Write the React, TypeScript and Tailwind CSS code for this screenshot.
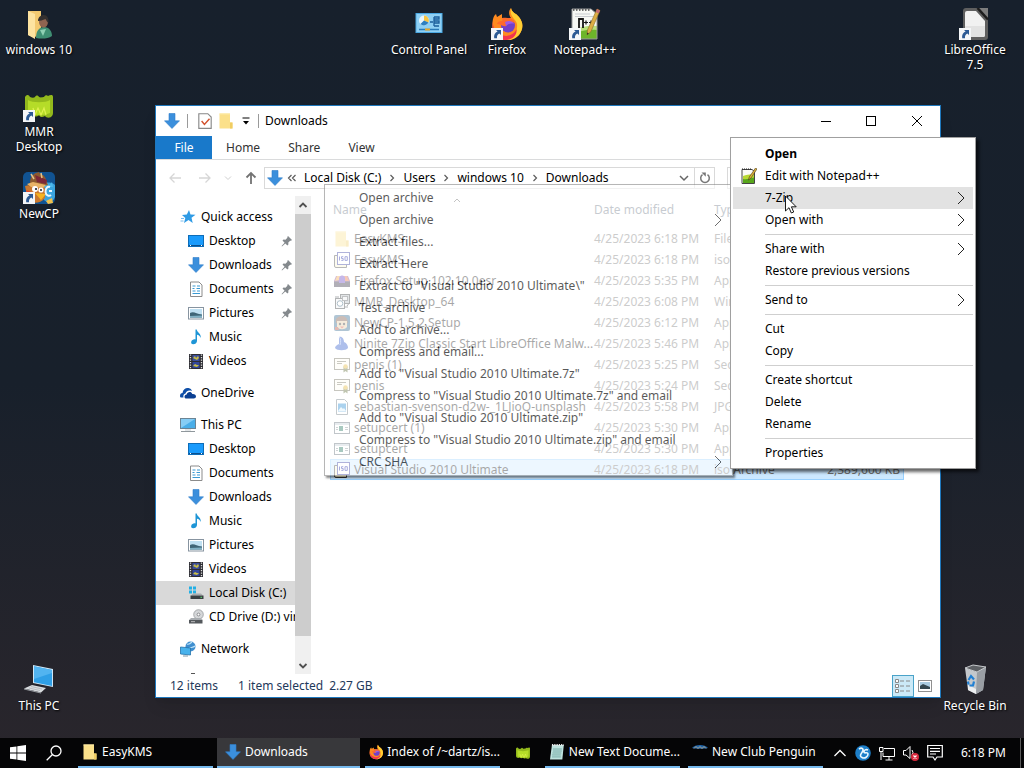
import type { ReactNode } from 'react';

interface IconProps {
  className?: string;
}

function ShortcutBadge() {
  return (
    <svg viewBox="0 0 12 12" className="absolute bottom-0 left-0 w-3 h-3">
      <rect width="12" height="12" fill="#f4f6f8" />
      <path d="M5 2h5v5L8.400 5.400C6.600 6.200 5.800 7.600 6 10.200H3.200C2.600 7 4 4.800 6.600 3.600Z" fill="#2c5a94" />
    </svg>
  );
}

function DownArrowIcon({ className = 'w-4 h-4' }: IconProps) {
  return (
    <svg viewBox="0 0 16 16" className={className}>
      <path d="M5 .5h6v7.300h4.500L8 15.500.5 7.800H5Z" fill="#3b8fdc" stroke="#2f7ec9" strokeWidth=".6" />
    </svg>
  );
}

function FolderIcon({ className = 'w-4 h-4' }: IconProps) {
  return (
    <svg viewBox="0 0 16 16" className={className}>
      <path d="M1.500.5H12v9h2.500v6h-13Z" fill="#fbe08a" />
      <path d="M12 9.500h2.500v6H12Z" fill="#f0cd62" />
      <path d="M1.500.5H12v1H1.500Z" fill="#fdeaa6" />
    </svg>
  );
}

function UserFolderIcon() {
  return (
    <svg viewBox="0 0 32 32" className="w-8 h-8">
      <path d="M5 3h13v25l-8 1-5-2Z" fill="#f3c970" />
      <path d="M5 3l7 3v25l-7-4Z" fill="#fde3a0" />
      <path d="M13 30c0-7 3-11 8-11s8 4 8 9c-4 3-11 3-16 2Z" fill="#3f8f73" />
      <path d="M17 22l3 6 3-7Z" fill="#8fd0b4" />
      <ellipse cx="20.500" cy="14" rx="4.500" ry="5.500" fill="#8f6450" />
      <path d="M15 13c0-4 3-6 6-6s5 3 4.500 8c-2-1-2-3-3-4-3 1-5 2-7.500 2Z" fill="#33302f" />
    </svg>
  );
}

function MmrIcon({ className = 'w-8 h-8' }: IconProps) {
  return (
    <svg viewBox="0 0 32 32" className={className}>
      <path d="M2 7c2-3 4-2 5 0 2 1 4 1 5 0 1-2 3-2 4 0 2 1 4 0 5 0 1-2 3-2 4-1 2-1 5-2 5 1v16c0 5-6 6-8 3-3 2-5 1-6-1-2 2-5 2-6 0-3 2-8 1-8-3Z" fill="#93b91c" />
      <path d="M5 10c4 3 18 3 22 0v13c-7 3-15 3-22 0Z" fill="#b5dc28" />
      <path d="M10 18l2 7 3-7 3 7 3-7 2 7" fill="none" stroke="#dff24f" strokeWidth="1.200" />
    </svg>
  );
}

function NewCpIcon({ className = 'w-8 h-8' }: IconProps) {
  return (
    <svg viewBox="0 0 32 32" className={className}>
      <rect width="32" height="32" rx="5" fill="#115392" />
      <path d="M20 14c3-5 9-4 12-1v12c-2 6-8 6-11 3Z" fill="#3aa4de" />
      <path d="M22 15l2-5 2 4 3-4 1 5" fill="#4db9ec" />
      <path d="M2 14c6-2 16-2 20 2v10c-5 6-13 6-17 2Z" fill="#c9782f" />
      <path d="M7 11c0-8 5-10 9-11 1 3 6 2 7 8l2 5c-7 2-12 2-20 1Z" fill="#8d5a2e" />
      <path d="M12 3l12 5-1 4-9-2Z" fill="#7c2736" />
      <path d="M4 12l6-2 13 3-3 3-12-1Z" fill="#e9b366" />
      <path d="M8 2l3 5M18 1l1 5" stroke="#e6c28a" strokeWidth="1.500" />
      <circle cx="12" cy="17" r="3" fill="#fff" />
      <circle cx="18" cy="18" r="2.600" fill="#fff" />
      <circle cx="13" cy="17" r="1.100" fill="#20242c" />
      <circle cx="18" cy="18" r="1" fill="#20242c" />
      <path d="M12 21l11 1-5 6Z" fill="#f5b321" />
      <path d="M3 18l6 2-2 8Z" fill="#e2452a" />
      <path d="M27 15a3.500 4.500 0 1 0 1 8M26 19h3" fill="none" stroke="#e7f7ff" strokeWidth="2" />
      <path d="M23 29l6-3 1 5-5 1Z" fill="#f2c14b" />
    </svg>
  );
}

function ControlPanelIcon() {
  return (
    <svg viewBox="0 0 32 32" className="w-8 h-8">
      <rect x="2.500" y="5" width="27" height="20" fill="#4ba9e4" />
      <rect x="3.500" y="6" width="25" height="18" fill="#8fd0f4" />
      <circle cx="11" cy="12.500" r="5" fill="#e9f6fd" />
      <path d="M11 12.500V7.500a5 5 0 0 1 4.500 7Z" fill="#f6c443" />
      <path d="M11 12.500l4.500 2a5 5 0 0 1-8 1.500Z" fill="#2d7fc1" />
      <path d="M17 14h3m1-5v9m0-9h5v2h-5m0 2h5v2h-5m0 3h5" fill="none" stroke="#1b5e9b" strokeWidth="1.300" />
      <path d="M6 21.500h20" stroke="#2a7ab8" strokeWidth="1.500" />
      <path d="M12 21.500h5" stroke="#eaa927" strokeWidth="2" />
    </svg>
  );
}

function FirefoxIcon({ className = 'w-8 h-8' }: IconProps) {
  return (
    <svg viewBox="0 0 32 32" className={className}>
      <path d="M1.500 14C2 10 3 7.500 5 6l1 3 5-3v4h9c-3-4-2-8 0-10 1 5 5 5 8 9 5 6 4 13 0 18-6 7-17 7-23 1-4-4-4-9-3.500-14Z" fill="#ff8a1f" />
      <path d="M20 0c1 5 5 5 8 9 5 6 4 13 0 18-4 4-8 5-12 5 6-4 11-8 10-16-1-5-8-7-6-16Z" fill="#ffcf33" />
      <path d="M1.500 14c1 8 5 13 14 14 6-1 9-4 10-7 1 6-4 11-11 11S1 26 1.500 14Z" fill="#f2344f" />
      <circle cx="17" cy="17.500" r="7" fill="#7240c9" />
      <path d="M11 10c5-1 11 0 13 5-4-2-7 0-9 3-3 1-6-2-9-2 1-3 3-3 6-3Z" fill="#ff6a2b" />
      <path d="M14 14c4-2 8-1 9 2-3-1-6 0-8 2Z" fill="#9c5be8" />
    </svg>
  );
}

function NotepadPlusIcon() {
  return (
    <svg viewBox="0 0 32 32" className="w-8 h-8">
      <path d="M3 1h19l6 5v25H3Z" fill="#f7f8f4" />
      <path d="M3 22c9-3 17-5 25-4v13H3Z" fill="#b9e07a" />
      <path d="M3 26c8-3 16-5 25-4v9H3Z" fill="#6db52a" />
      <path d="M3 1h19l6 5v25H3Z" fill="none" stroke="#999" strokeWidth="1" />
      <path d="M4 2h17" stroke="#444" strokeWidth="1.500" strokeDasharray="1.500 1.500" />
      <path d="M6 6h15M6 8.500h18" stroke="#c9ccd0" />
      <path d="M10 20v-9h4v9" fill="none" stroke="#151515" strokeWidth="1.800" />
      <path d="M15 14.500h4m-2-2v4m3-2h4m-2-2v4" stroke="#151515" strokeWidth="1.200" />
      <path d="M28 1l3 1.500-9 21-4 3.500 .5-5Z" fill="#dcae45" stroke="#8a6a28" strokeWidth=".6" />
      <path d="M28 1l3 1.500-1.300 3-3-1.500Z" fill="#c66a70" />
      <path d="M18 27l.3-2.500 1.500 1Z" fill="#222" />
    </svg>
  );
}

function NotepadPlusSmallIcon() {
  return (
    <svg viewBox="0 0 16 16" className="w-4 h-4">
      <path d="M1 1.500h10l2.500 2V15.500H1Z" fill="#fbfbf8" stroke="#444" />
      <path d="M1 1h10" stroke="#222" strokeDasharray="1 1" />
      <path d="M2 8c4-1 7-2 11-1.500V15H2Z" fill="#b8d832" />
      <path d="M2 11c4 1 7-1 11-1.500V15H2Z" fill="#58a61c" />
      <path d="M14.500 0l1.500 1-6 9-2.500 2 .8-3Z" fill="#e0b33c" stroke="#473615" strokeWidth=".6" />
    </svg>
  );
}

function LibreOfficeIcon() {
  return (
    <svg viewBox="0 0 32 32" className="w-8 h-8">
      <path d="M7 0h13l9 10v19a3 3 0 0 1-3 3H7a3 3 0 0 1-3-3V3a3 3 0 0 1 3-3Z" fill="#5f5f5f" />
      <path d="M19 0h10v11Z" fill="#7d7d7d" />
      <path d="M18.500 0L29 11.500" stroke="#1d1d1d" strokeWidth="2.500" />
      <path d="M8 3h9l9 10v14a2 2 0 0 1-2 2H8a2 2 0 0 1-2-2V5a2 2 0 0 1 2-2Z" fill="#f1f1f1" />
      <path d="M6 18h20v9a2 2 0 0 1-2 2H8a2 2 0 0 1-2-2Z" fill="#e2e2e2" />
    </svg>
  );
}

function LaptopIcon() {
  return (
    <svg viewBox="0 0 32 32" className="w-8 h-8">
      <path d="M10 1l20 4v18l-20-4Z" fill="#cfe6f5" />
      <path d="M11 2.300l18 3.600v16l-18-3.600Z" fill="#2f9fe6" />
      <path d="M11 2.300l18 3.600v3L11 15Z" fill="#52b4f0" />
      <path d="M9 21l14 3-5 4.500L1 24.500Z" fill="#d9dcdf" />
      <path d="M1 24.500l17 4v1l-17-4Z" fill="#9a9ea3" />
      <path d="M8 22.500l11 2.500M6 24l11 2.500" stroke="#aeb3b8" strokeWidth=".8" />
    </svg>
  );
}

function RecycleBinIcon() {
  return (
    <svg viewBox="0 0 32 32" className="w-8 h-8">
      <path d="M6 4l12 4 9-5-3 23-7 4-8-4Z" fill="#c4c8cc" />
      <path d="M18 8l9-5-3 23-7 4Z" fill="#999ea4" />
      <path d="M6 4l8-3 13 2-9 5Z" fill="#5d6064" stroke="#c6c9cc" strokeWidth="1" />
      <path d="M9 21l8 4v5l-8-4Z" fill="#eceef0" />
      <path d="M9.500 16l2.500-4 3 3.500m0 2l-1 4h-3.500m-1-1l-.5-3" fill="none" stroke="#2180d4" strokeWidth="2.200" />
    </svg>
  );
}

function StarIcon() {
  return (
    <svg viewBox="0 0 16 16" className="w-4 h-4">
      <path d="M9 1l1.500 4.500 5 .3-4 3 1.200 5.200L8.500 11 4 14l1.300-5L2 6l4.800-.5Z" fill="#2f9be5" />
      <path d="M1 9.500h3M.5 12h3" stroke="#79bdee" strokeWidth="1" />
    </svg>
  );
}

function DesktopIcon() {
  return (
    <svg viewBox="0 0 16 16" className="w-4 h-4">
      <rect x=".5" y="2.500" width="15" height="11" fill="#1a9bfc" stroke="#0e6db8" />
      <path d="M1 12.500h14" stroke="#0b4f8c" strokeWidth="1" />
      <path d="M2 12.500h1M13 12.500h1" stroke="#fff" />
    </svg>
  );
}

function DocumentIcon() {
  return (
    <svg viewBox="0 0 16 16" className="w-4 h-4">
      <path d="M2.500 1h8.500l3 3v11.500H2.500Z" fill="#fff" stroke="#8b8b8b" />
      <path d="M4.500 5h3m1.500 0h3M4.500 7.500h2m2 0h3.500M4.500 10h3m1.500 0h3M4.500 12.500h7.500" stroke="#3a9ad3" strokeWidth="1.200" />
    </svg>
  );
}

function PictureIcon() {
  return (
    <svg viewBox="0 0 16 16" className="w-4 h-4">
      <rect x=".5" y="2.500" width="15" height="11.500" fill="#fff" stroke="#8794a0" />
      <rect x="2" y="4" width="12" height="8.500" fill="#bfe0f2" />
      <path d="M2 8c4-2 6 1 12 1.500v3H2Z" fill="#3f6577" />
      <path d="M2 11l12-.5v2H2Z" fill="#7fb0c4" />
    </svg>
  );
}

function MusicIcon() {
  return (
    <svg viewBox="0 0 16 16" className="w-4 h-4">
      <path d="M7.500.5h1.200c.3 3 4.800 4 4 8.500-.6-2-2-3-3.700-3.300V12c0 2-2 3.300-3.800 3.300S2.800 14 3.300 12.500s2.500-2.600 4.200-2Z" fill="#1e95d6" />
    </svg>
  );
}

function VideoIcon() {
  return (
    <svg viewBox="0 0 16 16" className="w-4 h-4">
      <rect x="1" y="1" width="14" height="15" fill="#2d2d33" />
      <path d="M2.500 1.500v14M13.500 1.500v14" stroke="#dedede" strokeWidth="1.300" strokeDasharray="1.300 1.200" />
      <rect x="4.500" y="2" width="7" height="6" fill="#3c4e9c" />
      <rect x="4.500" y="9" width="7" height="6" fill="#33469a" />
      <path d="M5 5l2-2 1 2 2-2 1 2-2 2Z M5 13l2-2 2 1 2 0-2 2Z" fill="#c8bd45" />
    </svg>
  );
}

function OneDriveIcon() {
  return (
    <svg viewBox="0 0 16 16" className="w-4 h-4">
      <path d="M0 11c0-2 1-3 2.500-3C3 4 6 2.500 8.500 3c2 .4 3 1.500 3.500 3-4-1.500-6 .8-6.500 2.500C3.500 9 3 10.500 3.500 12.500H1.500C.6 12.500 0 12 0 11Z" fill="#0f4fa8" />
      <path d="M4.500 12c0-1.600.8-2.500 2.200-2.600C7 6.500 11.500 6 12.300 9c2.200-.3 3.700.9 3.700 2.500 0 1.300-1 2-2.200 2H6.200c-1 0-1.700-.7-1.700-1.500Z" fill="#0a3f92" />
    </svg>
  );
}

function ThisPcIcon() {
  return (
    <svg viewBox="0 0 16 16" className="w-4 h-4">
      <rect x=".5" y="1.500" width="15" height="10" fill="#4aaee8" stroke="#6b8494" />
      <path d="M1 2h14L1 11Z" fill="#86cdf5" />
      <path d="M1 14.500h14" stroke="#8f979c" strokeWidth="1" />
      <path d="M5 13h6" stroke="#c6cdd1" strokeWidth="1" />
    </svg>
  );
}

function DiskIcon() {
  return (
    <svg viewBox="0 0 16 16" className="w-4 h-4">
      <path d="M1 1.500h3v3H1ZM5 1.500h3v3H5ZM1 5.500h3v3H1ZM5 5.500h3v3H5Z" fill="#22b0e6" />
      <path d="M3 10.500l2-2h8l2 2Z" fill="#a8acb0" />
      <rect x="2.500" y="10.500" width="13" height="3.500" fill="#3b3f43" />
      <path d="M12.500 12.300h1.500" stroke="#5be36b" strokeWidth="1" />
    </svg>
  );
}

function CdIcon() {
  return (
    <svg viewBox="0 0 16 16" className="w-4 h-4">
      <circle cx="10.500" cy="5.500" r="4.800" fill="#d5d7d9" stroke="#8e9194" strokeWidth=".7" />
      <circle cx="10.500" cy="5.500" r="1.400" fill="#fff" stroke="#77797c" strokeWidth=".8" />
      <path d="M1 11l2-2h9l3 2Z" fill="#a8acb0" />
      <rect x="1" y="11" width="13.500" height="3.500" fill="#54585c" />
      <path d="M3 12.700h4" stroke="#d6d6d6" strokeWidth=".8" />
    </svg>
  );
}

function NetworkIcon() {
  return (
    <svg viewBox="0 0 16 16" className="w-4 h-4">
      <circle cx="10.500" cy="5.500" r="5" fill="#3f8ecf" />
      <path d="M7 3c2 1 3 0 5-2M8 8c2-2 5-1 7-3" stroke="#bfe4f7" strokeWidth="1.200" fill="none" />
      <path d="M.5 6l10 1v7l-10-1Z" fill="#48b2ec" stroke="#2573ab" strokeWidth=".8" />
      <path d="M3 15h5" stroke="#7e99a8" />
    </svg>
  );
}

function PinIcon() {
  return (
    <svg viewBox="0 0 12 12" className="w-3 h-3">
      <path d="M7 1l4 4-1 .8-.8-.1L7.300 7.600l.1 2-1 1L4.300 8.500 1 11.500.6 11l3-3.300L1.500 5.600l1-1 2 .1 1.900-1.900-.1-.8Z" fill="#84898d" />
    </svg>
  );
}

function IsoIcon() {
  return (
    <svg viewBox="0 0 16 16" className="w-4 h-4">
      <path d="M.5 3.500h3v9h9v3H2a1.500 1.500 0 0 1-1.500-1.500Z" fill="#fbf6d0" stroke="#333" />
      <rect x="3.500" y=".5" width="12" height="12" fill="#fff" stroke="#1c2695" />
      <path d="M5.500 4.500v4M9.300 4.700H7.500v1.800h1.700v1.900H7.300M11 4.700h2.300v3.700H11Z" fill="none" stroke="#0a16a0" strokeWidth="1" />
    </svg>
  );
}

function FirefoxSetupIcon() {
  return (
    <svg viewBox="0 0 16 16" className="w-4 h-4">
      <path d="M0 8l2-5h12l2 5v6H0Z" fill="#7c3d8a" />
      <path d="M1 8l2-5h4l-2 4Z" fill="#f6a13a" />
      <path d="M8 3h5l2 5H9Z" fill="#e9662f" />
      <rect y="8.500" width="16" height="5.500" fill="#1f1a30" />
      <path d="M5 5a3 3 0 0 1 6 1v4H5Z" fill="#5c33c0" />
    </svg>
  );
}

function MsiIcon() {
  return (
    <svg viewBox="0 0 16 16" className="w-4 h-4">
      <rect x="6.500" y=".5" width="9" height="9" fill="#aeb6bc" stroke="#22282d" />
      <rect x="1.500" y="4.500" width="9" height="10" fill="#eef0f1" stroke="#22282d" />
      <rect x="8.500" y="2.500" width="5" height="4" fill="#e8edf0" stroke="#4d5359" />
      <circle cx="6" cy="9.500" r="2.800" fill="#fff" stroke="#1f4f6c" />
      <path d="M13 12l1.500-2M1 3h4M11 13h3" stroke="#22282d" />
    </svg>
  );
}

function NewCpSetupIcon() {
  return (
    <svg viewBox="0 0 16 16" className="w-4 h-4">
      <rect width="16" height="16" rx="2" fill="#1d5a86" />
      <path d="M2 4c3-4 9-4 11 0l1 4H2Z" fill="#6b4430" />
      <path d="M3 6h10v6c-2 3-8 3-10 0Z" fill="#e7c9a0" />
      <circle cx="6" cy="9" r="1.200" fill="#222" />
      <circle cx="10" cy="9" r="1.200" fill="#222" />
      <path d="M6 11.500h4l-2 2Z" fill="#d8422b" />
      <path d="M1 12h3l1 3H1Z" fill="#b23a28" />
    </svg>
  );
}

function NiniteIcon() {
  return (
    <svg viewBox="0 0 16 16" className="w-4 h-4">
      <path d="M5 1c3-1 5 2 5 5 3 1 4 4 4 6-2 3-11 3-13 0 0-2 2-3 4-4Z" fill="#1848c8" />
      <path d="M5 1c2 1 2 5 1 8" stroke="#8fb0f2" fill="none" />
    </svg>
  );
}

function CertIcon() {
  return (
    <svg viewBox="0 0 16 16" className="w-4 h-4">
      <rect x=".5" y="1.500" width="15" height="11" fill="#fffdf2" stroke="#605c48" />
      <path d="M3 4.500h9M3 6.500h5" stroke="#6a6752" />
      <path d="M9.500 9.500h4v6l-2-1.500-2 1.500Z" fill="#4b5a1c" />
      <circle cx="11.500" cy="9.500" r="2.200" fill="#e3b020" />
    </svg>
  );
}

function JpgIcon() {
  return (
    <svg viewBox="0 0 16 16" className="w-4 h-4">
      <path d="M2.500.5h8l3 3v12h-11Z" fill="#fff" stroke="#5d6a73" />
      <rect x="4" y="4.500" width="8" height="8" fill="#0f80d0" />
      <path d="M4 12l3-4 2 2 1-1 2 3Z" fill="#d8eefb" />
    </svg>
  );
}

function AppIcon() {
  return (
    <svg viewBox="0 0 16 16" className="w-4 h-4">
      <rect x=".5" y="2.500" width="15" height="11" fill="#fff" stroke="#4d5d68" />
      <path d="M1 4h14" stroke="#7f95a4" />
      <rect x="5" y="6" width="4" height="5" fill="#07654c" />
      <path d="M2 7.500h2M2 9.500h2M11 7.500h3M11 9.500h3" stroke="#7a848b" />
    </svg>
  );
}

function ChevronRight() {
  return (
    <svg viewBox="0 0 8 14" className="w-2 h-3.5">
      <path d="M1 1l6 6-6 6" fill="none" stroke="#222" strokeWidth="1" />
    </svg>
  );
}

function CrumbArrow() {
  return (
    <svg viewBox="0 0 6 8" className="w-1.5 h-2">
      <path d="M1.500 1l3 3-3 3" fill="none" stroke="#5c5c5c" strokeWidth="1.200" />
    </svg>
  );
}

const desktopIcons: { label: string; icon: ReactNode; spot: string; shortcut?: boolean }[] = [
  { label: 'windows 10', icon: <UserFolderIcon />, spot: 'left-0 top-2' },
  { label: 'MMR Desktop', icon: <MmrIcon />, spot: 'left-0 top-[90px]', shortcut: true },
  { label: 'NewCP', icon: <NewCpIcon />, spot: 'left-0 top-[172px]', shortcut: true },
  { label: 'This PC', icon: <LaptopIcon />, spot: 'left-0 top-[664px]' },
  { label: 'Control Panel', icon: <ControlPanelIcon />, spot: 'left-[390px] top-2' },
  { label: 'Firefox', icon: <FirefoxIcon />, spot: 'left-[468px] top-2', shortcut: true },
  { label: 'Notepad++', icon: <NotepadPlusIcon />, spot: 'left-[546px] top-2', shortcut: true },
  { label: 'LibreOffice 7.5', icon: <LibreOfficeIcon />, spot: 'right-[10px] top-2', shortcut: true },
  { label: 'Recycle Bin', icon: <RecycleBinIcon />, spot: 'right-[10px] top-[664px]' },
];

interface NavItem {
  label: string;
  icon: ReactNode;
  pinned?: boolean;
  selected?: boolean;
}

const navGroups: { head: NavItem; items: NavItem[] }[] = [
  {
    head: { label: 'Quick access', icon: <StarIcon /> },
    items: [
      { label: 'Desktop', icon: <DesktopIcon />, pinned: true },
      { label: 'Downloads', icon: <DownArrowIcon />, pinned: true },
      { label: 'Documents', icon: <DocumentIcon />, pinned: true },
      { label: 'Pictures', icon: <PictureIcon />, pinned: true },
      { label: 'Music', icon: <MusicIcon /> },
      { label: 'Videos', icon: <VideoIcon /> },
    ],
  },
  { head: { label: 'OneDrive', icon: <OneDriveIcon /> }, items: [] },
  {
    head: { label: 'This PC', icon: <ThisPcIcon /> },
    items: [
      { label: 'Desktop', icon: <DesktopIcon /> },
      { label: 'Documents', icon: <DocumentIcon /> },
      { label: 'Downloads', icon: <DownArrowIcon /> },
      { label: 'Music', icon: <MusicIcon /> },
      { label: 'Pictures', icon: <PictureIcon /> },
      { label: 'Videos', icon: <VideoIcon /> },
      { label: 'Local Disk (C:)', icon: <DiskIcon />, selected: true },
      { label: 'CD Drive (D:) virt', icon: <CdIcon /> },
    ],
  },
  { head: { label: 'Network', icon: <NetworkIcon /> }, items: [] },
];

const files = [
  { name: 'EasyKMS', icon: <FolderIcon />, date: '4/25/2023 6:18 PM', type: 'File folder' },
  { name: 'EasyKMS', icon: <IsoIcon />, date: '4/25/2023 6:18 PM', type: 'iso Archive' },
  { name: 'Firefox Setup 102.10.0esr', icon: <FirefoxSetupIcon />, date: '4/25/2023 5:35 PM', type: 'Application' },
  { name: 'MMR_Desktop_64', icon: <MsiIcon />, date: '4/25/2023 6:08 PM', type: 'Windows Install...' },
  { name: 'NewCP-1.5.2.Setup', icon: <NewCpSetupIcon />, date: '4/25/2023 6:12 PM', type: 'Application' },
  { name: 'Ninite 7Zip Classic Start LibreOffice Malw...', icon: <NiniteIcon />, date: '4/25/2023 5:46 PM', type: 'Application' },
  { name: 'penis (1)', icon: <CertIcon />, date: '4/25/2023 5:25 PM', type: 'Security Certif...' },
  { name: 'penis', icon: <CertIcon />, date: '4/25/2023 5:24 PM', type: 'Security Certif...' },
  { name: 'sebastian-svenson-d2w-_1LJioQ-unsplash', icon: <JpgIcon />, date: '4/25/2023 5:58 PM', type: 'JPG File' },
  { name: 'setupcert (1)', icon: <AppIcon />, date: '4/25/2023 5:30 PM', type: 'Application' },
  { name: 'setupcert', icon: <AppIcon />, date: '4/25/2023 5:30 PM', type: 'Application' },
  { name: 'Visual Studio 2010 Ultimate', icon: <IsoIcon />, date: '4/25/2023 6:18 PM', type: 'iso Archive', size: '2,389,600 KB', selected: true },
];

interface MenuEntry {
  label: string;
  bold?: boolean;
  arrow?: boolean;
  hover?: boolean;
  icon?: ReactNode;
}

const contextGroups: MenuEntry[][] = [
  [
    { label: 'Open', bold: true },
    { label: 'Edit with Notepad++', icon: <NotepadPlusSmallIcon /> },
    { label: '7-Zip', arrow: true, hover: true },
    { label: 'Open with', arrow: true },
  ],
  [{ label: 'Share with', arrow: true }, { label: 'Restore previous versions' }],
  [{ label: 'Send to', arrow: true }],
  [{ label: 'Cut' }, { label: 'Copy' }],
  [{ label: 'Create shortcut' }, { label: 'Delete' }, { label: 'Rename' }],
  [{ label: 'Properties' }],
];

const zipEntries: MenuEntry[] = [
  { label: 'Open archive' },
  { label: 'Open archive', arrow: true },
  { label: 'Extract files...' },
  { label: 'Extract Here' },
  { label: 'Extract to "Visual Studio 2010 Ultimate\\"' },
  { label: 'Test archive' },
  { label: 'Add to archive...' },
  { label: 'Compress and email...' },
  { label: 'Add to "Visual Studio 2010 Ultimate.7z"' },
  { label: 'Compress to "Visual Studio 2010 Ultimate.7z" and email' },
  { label: 'Add to "Visual Studio 2010 Ultimate.zip"' },
  { label: 'Compress to "Visual Studio 2010 Ultimate.zip" and email' },
  { label: 'CRC SHA', arrow: true },
];

function MenuRow({ entry }: { entry: MenuEntry }) {
  return (
    <button
      type="button"
      role="menuitem"
      className={`flex items-center w-full h-[22px] text-left ${entry.hover ? 'bg-[#e2e2e2]' : ''}`}
    >
      <span className="w-8 shrink-0 flex justify-center">{entry.icon}</span>
      <span className={`flex-1 whitespace-nowrap ${entry.bold ? 'font-bold' : ''}`}>{entry.label}</span>
      {entry.arrow && (
        <span className="pr-2">
          <ChevronRight />
        </span>
      )}
    </button>
  );
}

function NavRow({ item, child }: { item: NavItem; child?: boolean }) {
  return (
    <button
      type="button"
      className={`flex items-center gap-[5px] w-full h-6 shrink-0 text-left whitespace-nowrap overflow-hidden ${child ? 'pl-8' : 'pl-6'} ${item.selected ? 'bg-[#d9d9d9]' : ''}`}
    >
      <span className="shrink-0">{item.icon}</span>
      <span className="flex-1">{item.label}</span>
      {item.pinned && (
        <span className="pr-0.5">
          <PinIcon />
        </span>
      )}
    </button>
  );
}

function TitleBar() {
  return (
    <div className="flex items-center h-[30px] pl-2">
      <DownArrowIcon />
      <span className="w-px h-3.5 ml-[7px] bg-[#9a9a9a]" />
      <button type="button" title="Properties" className="ml-2">
        <svg viewBox="0 0 16 16" className="w-[18px] h-[18px]">
          <path d="M2.500 1.500h8l3 3v10h-11Z" fill="#fff" stroke="#888" />
          <path d="M5 8l2.500 3L12 6" fill="none" stroke="#d2522e" strokeWidth="1.300" />
        </svg>
      </button>
      <button type="button" title="New folder" className="ml-1">
        <FolderIcon />
      </button>
      <button type="button" title="Customize Quick Access Toolbar" className="ml-2">
        <svg viewBox="0 0 8 8" className="w-2 h-2">
          <path d="M.5 1h7" stroke="#000" />
          <path d="M1 4h6L4 7.500Z" fill="#000" />
        </svg>
      </button>
      <span className="w-px h-3.5 ml-2 bg-[#9a9a9a]" />
      <span className="ml-1.5 flex-1">Downloads</span>
      <button type="button" aria-label="Minimize" className="w-[45px] flex justify-center">
        <svg viewBox="0 0 12 12" className="w-3 h-3">
          <path d="M1 6.500h10" stroke="#000" />
        </svg>
      </button>
      <button type="button" aria-label="Maximize" className="w-[45px] flex justify-center">
        <svg viewBox="0 0 12 12" className="w-3 h-3">
          <rect x="1.500" y="1.500" width="9" height="9" fill="none" stroke="#000" />
        </svg>
      </button>
      <button type="button" aria-label="Close" className="w-[47px] flex justify-center">
        <svg viewBox="0 0 12 12" className="w-3 h-3">
          <path d="M1 1l10 10M11 1L1 11" stroke="#000" />
        </svg>
      </button>
    </div>
  );
}

function AddressBar() {
  const crumbs = ['Local Disk (C:)', 'Users', 'windows 10', 'Downloads'];
  return (
    <div className="flex items-center h-9 pl-3 pr-2">
      <button type="button" aria-label="Back">
        <svg viewBox="0 0 14 14" className="w-3.5 h-3.5">
          <path d="M13 7H2M6.500 2.500L2 7l4.500 4.500" fill="none" stroke="#d6d6d6" strokeWidth="1.300" />
        </svg>
      </button>
      <button type="button" aria-label="Forward" className="ml-4">
        <svg viewBox="0 0 14 14" className="w-3.5 h-3.5">
          <path d="M1 7h11M7.500 2.500L12 7l-4.500 4.500" fill="none" stroke="#d6d6d6" strokeWidth="1.300" />
        </svg>
      </button>
      <button type="button" aria-label="Recent locations" className="ml-3">
        <svg viewBox="0 0 8 8" className="w-2 h-2">
          <path d="M1 2.500l3 3 3-3" fill="none" stroke="#cfcfcf" />
        </svg>
      </button>
      <button type="button" aria-label="Up" className="ml-3">
        <svg viewBox="0 0 14 14" className="w-3.5 h-3.5">
          <path d="M7 13V2M2.500 6.500L7 2l4.500 4.500" fill="none" stroke="#737373" strokeWidth="1.800" />
        </svg>
      </button>
      <div className="flex items-center flex-1 h-[22px] ml-1.5 pl-0.5 border border-[#d9d9d9]">
        <DownArrowIcon />
        <svg viewBox="0 0 10 8" className="w-2.5 h-2 ml-1 mr-[7px]">
          <path d="M4.500 1l-3 3 3 3M8.500 1l-3 3 3 3" fill="none" stroke="#5c5c5c" strokeWidth="1.200" />
        </svg>
        <div className="flex items-center gap-2 flex-1 whitespace-nowrap">
          {crumbs.map((crumb, i) => (
            <span key={crumb} className="flex items-center gap-2">
              {i > 0 && <CrumbArrow />}
              <a href="#">{crumb}</a>
            </span>
          ))}
        </div>
        <button type="button" aria-label="Previous locations" className="mr-[5px]">
          <svg viewBox="0 0 10 8" className="w-2.5 h-2">
            <path d="M1 2l4 4 4-4" fill="none" stroke="#666" strokeWidth="1.500" />
          </svg>
        </button>
        <button type="button" aria-label="Refresh" className="flex items-center justify-center h-full w-5 border-l border-[#d9d9d9]">
          <svg viewBox="0 0 14 14" className="w-3.5 h-3.5">
            <path d="M9.500 3.600A4.300 4.300 0 1 1 4.500 3.600" fill="none" stroke="#777" strokeWidth="1.500" />
            <path d="M3.500 1.500h4.300v4.300Z" fill="#777" />
          </svg>
        </button>
      </div>
      <input type="search" aria-label="Search Downloads" className="w-[205px] h-[22px] ml-3 border border-[#d9d9d9] bg-white" />
    </div>
  );
}

function Sidebar() {
  return (
    <div className="flex w-[156px] shrink-0 overflow-hidden">
      <nav className="flex flex-col gap-2 w-[139px] pt-[9px] overflow-hidden">
        {navGroups.map((group) => (
          <div key={group.head.label} className="shrink-0">
            <NavRow item={group.head} />
            {group.items.map((item) => (
              <NavRow key={item.label} item={item} child />
            ))}
          </div>
        ))}
        <span className="w-1 h-px ml-[35px] mt-1 shrink-0 bg-[#555]" />
      </nav>
      <div className="flex flex-col w-4 bg-[#f0f0f0]">
        <button type="button" aria-label="Scroll up" className="flex items-center justify-center h-[18px]">
          <svg viewBox="0 0 10 8" className="w-2.5 h-2">
            <path d="M1.500 6L5 2.500 8.500 6" fill="none" stroke="#505050" strokeWidth="1.800" />
          </svg>
        </button>
        <div className="flex-1 mb-[22px] bg-[#cdcdcd]" />
        <button type="button" aria-label="Scroll down" className="flex items-center justify-center h-4">
          <svg viewBox="0 0 10 8" className="w-2.5 h-2">
            <path d="M1.500 2L5 5.500 8.500 2" fill="none" stroke="#505050" strokeWidth="1.800" />
          </svg>
        </button>
      </div>
    </div>
  );
}

function FileList() {
  return (
    <div className="flex-1 pl-[18px] pt-0.5">
      <table className="w-[574px] table-fixed border-collapse text-left whitespace-nowrap">
        <thead>
          <tr className="h-[30px] text-[#5f6c7b]">
            <th className="relative w-[258px] pl-[3px] pb-1.5 font-normal align-middle">
              Name
              <svg viewBox="0 0 8 5" className="absolute top-0 left-[123px] w-2 h-[5px]">
                <path d="M1 4l3-3 3 3" fill="none" stroke="#555" />
              </svg>
            </th>
            <th className="w-[120px] pl-1.5 pb-1.5 font-normal">Date modified</th>
            <th className="w-[106px] pl-1.5 pb-1.5 font-normal">Type</th>
            <th className="pb-1.5 font-normal">Size</th>
          </tr>
        </thead>
        <tbody>
          {files.map((file, i) => (
            <tr key={i} className={`h-[21px] ${file.selected ? 'bg-[#cce8ff] outline outline-[#99d1ff] -outline-offset-1' : ''}`}>
              <td className="p-0">
                <div className="flex items-center gap-1 pl-1">
                  <span className="shrink-0">{file.icon}</span>
                  {file.name}
                </div>
              </td>
              <td className="p-0 pl-1.5 text-[#6d6d6d]">{file.date}</td>
              <td className="p-0 pl-1.5 text-[#6d6d6d]">{file.type}</td>
              <td className="p-0 pr-1 text-right text-[#6d6d6d]">{file.size}</td>
            </tr>
          ))}
        </tbody>
      </table>
    </div>
  );
}

function StatusBar() {
  return (
    <div className="flex items-center h-[23px] pl-3.5 pr-1 text-[#1e395b]">
      <span>12 items</span>
      <span className="ml-5">1 item selected</span>
      <span className="ml-1.5 flex-1">2.27 GB</span>
      <button type="button" aria-label="Details view" className="flex items-center justify-center w-[22px] h-[22px] border border-[#4aa3c9] bg-[#cbe9f7]">
        <svg viewBox="0 0 18 16" className="w-[18px] h-4">
          <path d="M1.500 1.500h3v3h-3ZM1.500 6.500h3v3h-3ZM1.500 11.500h3v3h-3Z" fill="#fff" stroke="#888" />
          <path d="M6 3h5M6 8h5M6 13h5M12 3h5M12 8h5M12 13h5" stroke="#888" strokeDasharray="4 1" />
        </svg>
      </button>
      <button type="button" aria-label="Large thumbnails" className="flex items-center justify-center w-[22px] h-[22px]">
        <svg viewBox="0 0 14 12" className="w-3.5 h-3">
          <rect x=".5" y=".5" width="13" height="11" fill="#fff" stroke="#909090" />
          <rect x="2" y="2" width="10" height="7" fill="#a9cbe0" />
          <path d="M2 6l3-2 7 3v2H2Z" fill="#33474f" />
        </svg>
      </button>
    </div>
  );
}

function ExplorerWindow() {
  return (
    <section className="absolute left-[155px] top-[105px] w-[786px] h-[593px] flex flex-col bg-white border border-[#1f78bd] text-black shadow-lg">
      <TitleBar />
      <div className="flex items-stretch h-6 border-b border-[#dadbdc] text-[#333]">
        <button type="button" className="w-14 bg-[#1979ca] text-white">File</button>
        <button type="button" className="px-3.5">Home</button>
        <button type="button" className="px-3.5">Share</button>
        <button type="button" className="px-3.5">View</button>
      </div>
      <AddressBar />
      <div className="flex flex-1 min-h-0">
        <Sidebar />
        <FileList />
      </div>
      <StatusBar />
    </section>
  );
}

function ZipMenu() {
  return (
    <div role="menu" className="absolute left-[324px] top-[184px] w-[409px] p-0.5 bg-white border border-[#909090] text-black opacity-65 shadow-[2px_2px_2px_#000b]">
      {zipEntries.map((entry, i) => (
        <MenuRow key={i} entry={entry} />
      ))}
    </div>
  );
}

function ContextMenu() {
  return (
    <div role="menu" className="absolute left-[730px] top-[137px] w-[246px] px-0.5 pt-[5px] pb-1 bg-white border border-[#a0a0a0] text-black shadow-[3px_3px_3px_#0009]">
      {contextGroups.map((group, i) => (
        <div key={i}>
          {i > 0 && <div className="h-px my-[3px] ml-8 bg-[#cfcfcf]" />}
          {group.map((entry) => (
            <MenuRow key={entry.label} entry={entry} />
          ))}
        </div>
      ))}
    </div>
  );
}

function Cursor() {
  return (
    <svg viewBox="0 0 12 19" className="absolute left-[785px] top-[195px] w-3 h-[19px]">
      <path d="M.5 1v15l3.500-3.300 2.300 5.300 2.400-1-2.300-5.200h4.800Z" fill="#fff" stroke="#000" strokeWidth=".9" />
    </svg>
  );
}

function Taskbar() {
  return (
    <footer className="flex items-stretch h-[30px] bg-[#050506] text-white whitespace-nowrap">
      <button type="button" aria-label="Start" className="w-9 flex items-center justify-center">
        <svg viewBox="0 0 16 16" className="w-4 h-4">
          <path d="M0 2.300L6.500 1.400v6.200H0ZM7.300 1.300L16 0v7.600H7.300ZM0 8.400h6.500v6.200L0 13.700ZM7.300 8.400H16V16l-8.700-1.300Z" fill="#fff" />
        </svg>
      </button>
      <button type="button" aria-label="Search" className="w-9 flex items-center justify-center">
        <svg viewBox="0 0 16 16" className="w-4 h-4">
          <circle cx="10" cy="6" r="5" fill="none" stroke="#fff" strokeWidth="1.300" />
          <path d="M6.500 9.500L.7 15.300" stroke="#fff" strokeWidth="1.300" />
        </svg>
      </button>
      <button type="button" className="flex items-center gap-1 w-[135px] ml-1.5 pl-1 border-b-2 border-[#76b9ed]">
        <FolderIcon />
        EasyKMS
      </button>
      <button type="button" className="flex items-center gap-1 w-[143px] ml-1 pl-2 bg-[#38383b] border-b-2 border-[#76b9ed]">
        <DownArrowIcon />
        Downloads
      </button>
      <button type="button" className="flex items-center gap-1 w-[135px] ml-[5px] pl-1 border-b-2 border-[#76b9ed]">
        <FirefoxIcon className="w-4 h-4" />
        Index of /~dartz/is...
      </button>
      <button type="button" aria-label="MMR Desktop" className="flex items-center justify-center w-[45px]">
        <MmrIcon className="w-4 h-4" />
      </button>
      <button type="button" className="flex items-center gap-1 w-[135px] pl-1 border-b-2 border-[#76b9ed]">
        <svg viewBox="0 0 16 16" className="w-4 h-4">
          <path d="M3 1h12l-1.500 14.500H1Z" fill="#bfe3df" />
          <path d="M3 1h12" stroke="#e8e8e8" strokeWidth="2" strokeDasharray="1.300 1" />
          <path d="M4 5h9M4 7h9M3.500 9h9M3 11h9M3 13h9" stroke="#59938f" strokeWidth=".7" />
        </svg>
        New Text Docume...
      </button>
      <button type="button" className="flex items-center gap-1 w-[135px] ml-2 pl-1 border-b-2 border-[#76b9ed]">
        <svg viewBox="0 0 16 16" className="w-4 h-4">
          <path d="M0 4c3-4 13-4 16 0-2 1-14 1-16 0Z" fill="#1f66ad" />
          <path d="M2 4.500l2-2 2 2 2-2 2 2 2-2 2 2" fill="none" stroke="#b9a887" strokeWidth="1" />
        </svg>
        New Club Penguin
      </button>
      <div className="flex items-center gap-2 ml-auto">
        <button type="button" aria-label="Show hidden icons">
          <svg viewBox="0 0 14 10" className="w-3.5 h-2.5">
            <path d="M1.500 8L7 2.500 12.500 8" fill="none" stroke="#fff" strokeWidth="1.300" />
          </svg>
        </button>
        <button type="button" aria-label="Updates">
          <svg viewBox="0 0 16 16" className="w-4 h-4">
            <circle cx="8" cy="8" r="7.800" fill="#1d7fc9" />
            <path d="M4 4c3-2 5 0 3.500 2.500S4 11 7 12.500s6-1 6-3.500-4 0-4-2 2-3 4-2" fill="none" stroke="#e9f7ff" strokeWidth="1.600" />
          </svg>
        </button>
        <button type="button" aria-label="Network">
          <svg viewBox="0 0 16 16" className="w-4 h-4">
            <path d="M5 3.500h10.500v8H4v-4M10 11.500V15M6.500 15h7M.5 2.500h3.500v4H.5ZM2 6.500V15" fill="none" stroke="#fff" />
          </svg>
        </button>
        <button type="button" aria-label="Volume muted">
          <svg viewBox="0 0 16 16" className="w-4 h-4">
            <path d="M.5 5.500H3l4-4v12l-4-3.500H.5ZM9 5q2 2.500 0 5" fill="none" stroke="#fff" />
            <circle cx="12" cy="12" r="4" fill="#d8283c" />
            <path d="M10.500 10.500l3 3m0-3l-3 3" stroke="#fff" strokeWidth="1.200" />
          </svg>
        </button>
        <button type="button" aria-label="Action center">
          <svg viewBox="0 0 16 18" className="w-4 h-[18px]">
            <path d="M.7 1.500h14.600v11.500H10L8 16l-2-3H.7Z" fill="none" stroke="#fff" strokeWidth="1.200" />
            <path d="M3 4.500h10M3 7.300h10M3 10h6" stroke="#fff" strokeWidth="1.200" />
          </svg>
        </button>
        <span className="ml-2.5 mr-1.5">6:18 PM</span>
        <span className="w-px h-[30px] mr-[3px] bg-[#5a5a5a]" />
      </div>
    </footer>
  );
}

export default function App() {
  return (
    <div className="flex flex-col min-h-screen overflow-hidden font-['Noto_Sans','Open_Sans',sans-serif] text-xs leading-4 bg-linear-to-b from-[#17202c] via-[#18202b] to-[#2a262c]">
      <main className="relative flex-1">
        {desktopIcons.map((item) => (
          <button
            key={item.label}
            type="button"
            className={`absolute flex flex-col items-center gap-0.5 w-[78px] leading-[15px] text-white [text-shadow:1px_1px_2px_#000] ${item.spot}`}
          >
            <span className="relative">
              {item.icon}
              {item.shortcut && <ShortcutBadge />}
            </span>
            <span>{item.label}</span>
          </button>
        ))}
        <ExplorerWindow />
        <ZipMenu />
        <ContextMenu />
        <Cursor />
      </main>
      <Taskbar />
    </div>
  );
}
